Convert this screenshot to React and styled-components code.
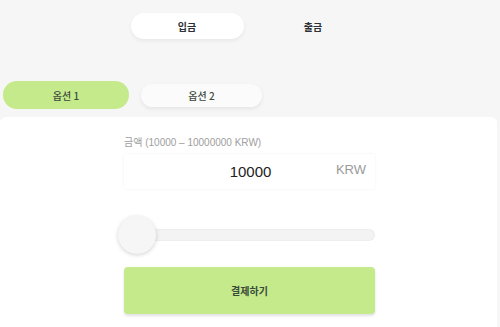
import React, { useState } from "react";
import styled, { createGlobalStyle } from "styled-components";

const GlobalStyle = createGlobalStyle`
  html, body {
    margin: 0;
    padding: 0;
    background: #f6f6f6;
    font-family: "Liberation Sans", "Noto Sans CJK KR", sans-serif;
  }
`;

const Page = styled.div`
  min-height: 327px;
  background: #f6f6f6;
  overflow: hidden;
`;

const TopTabs = styled.div`
  display: flex;
  justify-content: center;
  gap: 13px;
  padding-top: 13px;
`;

const TopTab = styled.button`
  width: 113px;
  height: 26px;
  border: none;
  border-radius: 13px;
  background: ${p => (p.active ? "#ffffff" : "transparent")};
  box-shadow: ${p => (p.active ? "0 2px 4px rgba(0,0,0,0.06)" : "none")};
  font-family: "Noto Sans CJK KR", sans-serif;
  font-size: 10px;
  font-weight: 700;
  color: #2e3238;
  padding: 0;
  cursor: pointer;
`;

const OptionTabs = styled.div`
  display: flex;
  align-items: center;
  gap: 12px;
  margin-top: 42px;
  padding-left: 3px;
`;

const OptionTab = styled.button`
  width: ${p => (p.active ? "126px" : "121px")};
  height: ${p => (p.active ? "28px" : "23px")};
  border: none;
  border-radius: 14px;
  background: ${p => (p.active ? "#c4ea8b" : "#fbfbfb")};
  box-shadow: ${p => (p.active ? "none" : "0 2px 4px rgba(0,0,0,0.07)")};
  font-family: "Noto Sans CJK KR", sans-serif;
  font-size: 10px;
  font-weight: 500;
  color: #3c4a3c;
  padding: 0;
  cursor: pointer;
`;

const Panel = styled.div`
  width: 497px;
  margin-top: 8px;
  background: #ffffff;
  border-radius: 6px 6px 0 0;
  padding: 19px 0 14px;
  box-sizing: border-box;
`;

const Column = styled.div`
  width: 251px;
  margin-left: 124px;
  display: flex;
  flex-direction: column;
`;

const Label = styled.div`
  font-size: 10px;
  line-height: 13px;
  color: #9e9e9e;
`;

const InputBox = styled.div`
  margin-top: 5px;
  height: 35px;
  display: flex;
  align-items: center;
  position: relative;
  border-radius: 3px;
  box-shadow: 0 0 3px rgba(0, 0, 0, 0.06);
`;

const Value = styled.div`
  flex: 1;
  text-align: center;
  font-size: 15px;
  color: #222;
  padding-left: 2px;
`;

const Unit = styled.span`
  position: absolute;
  right: 9px;
  top: 8px;
  font-size: 13px;
  color: #9a9a9a;
`;

const SliderWrap = styled.div`
  position: relative;
  margin-top: 28px;
  height: 36px;
  display: flex;
  align-items: center;
`;

const Track = styled.div`
  flex: 1;
  height: 12px;
  border-radius: 6px;
  background: #f3f3f3;
  box-shadow: inset 0 0 2px rgba(0, 0, 0, 0.08);
`;

const Thumb = styled.div`
  position: absolute;
  left: -6px;
  top: -1px;
  width: 38px;
  height: 38px;
  border-radius: 50%;
  background: #f6f6f6;
  box-shadow: 0 1px 4px rgba(0, 0, 0, 0.18);
`;

const PayButton = styled.button`
  margin-top: 14px;
  height: 47px;
  border: none;
  border-radius: 4px;
  background: #c4ea8b;
  box-shadow: 0 2px 3px rgba(0, 0, 0, 0.12);
  font-family: "Noto Sans CJK KR", sans-serif;
  font-size: 10px;
  font-weight: 700;
  color: #3a4a3c;
  cursor: pointer;
`;

export default function App() {
  const [mode, setMode] = useState("deposit");
  const [option, setOption] = useState(1);

  return (
    <>
      <GlobalStyle />
      <Page>
        <TopTabs>
          <TopTab active={mode === "deposit"} onClick={() => setMode("deposit")}>입금</TopTab>
          <TopTab active={mode === "withdraw"} onClick={() => setMode("withdraw")}>출금</TopTab>
        </TopTabs>
        <OptionTabs>
          <OptionTab active={option === 1} onClick={() => setOption(1)}>옵션 1</OptionTab>
          <OptionTab active={option === 2} onClick={() => setOption(2)}>옵션 2</OptionTab>
        </OptionTabs>
        <Panel>
          <Column>
            <Label>금액 (10000 – 10000000 KRW)</Label>
            <InputBox>
              <Value>10000</Value>
              <Unit>KRW</Unit>
            </InputBox>
            <SliderWrap>
              <Track />
              <Thumb />
            </SliderWrap>
            <PayButton>결제하기</PayButton>
          </Column>
        </Panel>
      </Page>
    </>
  );
}
